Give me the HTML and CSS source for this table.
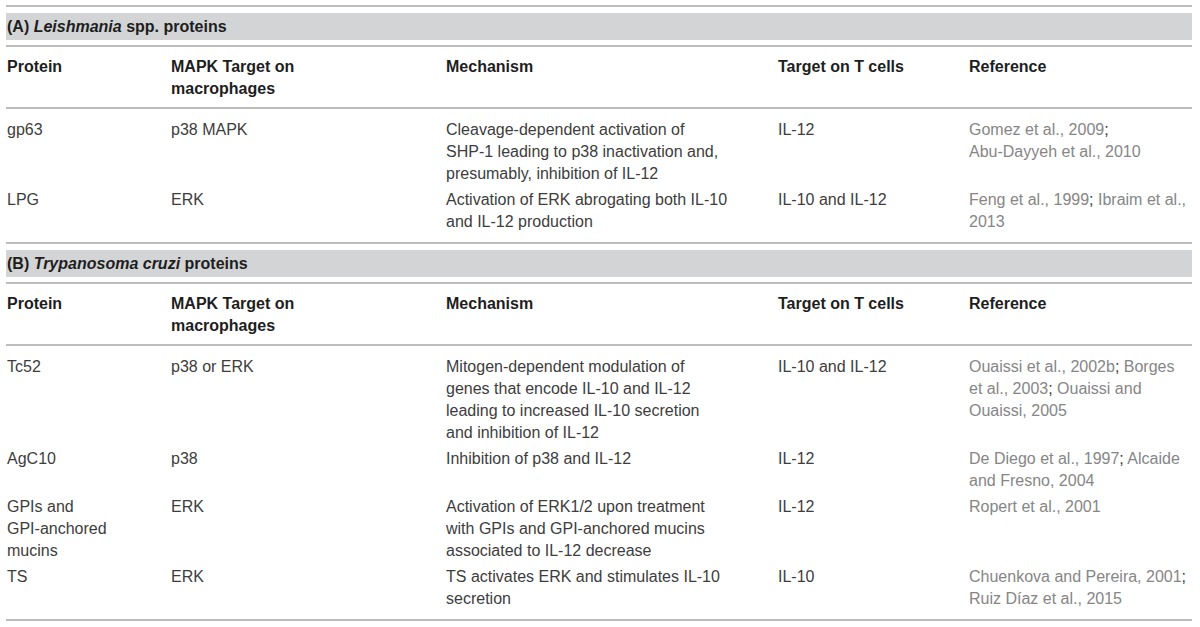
FILE: index.html
```html
<!DOCTYPE html>
<html lang="en">
<head>
<meta charset="utf-8">
<title>MAPK targets of parasite proteins</title>
<link rel="stylesheet" href="styles.css">
</head>
<body>
<div class="table">
  <div class="section"><div class="band">(A) <i>Leishmania</i> spp. proteins</div></div>
  <div class="row head">
    <div>Protein</div>
    <div>MAPK Target on<br>macrophages</div>
    <div>Mechanism</div>
    <div>Target on T cells</div>
    <div>Reference</div>
  </div>
  <div class="body">
    <div class="row">
      <div>gp63</div>
      <div>p38 MAPK</div>
      <div>Cleavage-dependent activation of<br>SHP-1 leading to p38 inactivation and,<br>presumably, inhibition of IL-12</div>
      <div>IL-12</div>
      <div class="ref"><span>Gomez et al., 2009</span>;<br><span>Abu-Dayyeh et al., 2010</span></div>
    </div>
    <div class="row">
      <div>LPG</div>
      <div>ERK</div>
      <div>Activation of ERK abrogating both IL-10<br>and IL-12 production</div>
      <div>IL-10 and IL-12</div>
      <div class="ref"><span>Feng et al., 1999</span>; <span>Ibraim et al.,<br>2013</span></div>
    </div>
  </div>
  <div class="section"><div class="band">(B) <i>Trypanosoma cruzi</i> proteins</div></div>
  <div class="row head">
    <div>Protein</div>
    <div>MAPK Target on<br>macrophages</div>
    <div>Mechanism</div>
    <div>Target on T cells</div>
    <div>Reference</div>
  </div>
  <div class="body">
    <div class="row">
      <div>Tc52</div>
      <div>p38 or ERK</div>
      <div>Mitogen-dependent modulation of<br>genes that encode IL-10 and IL-12<br>leading to increased IL-10 secretion<br>and inhibition of IL-12</div>
      <div>IL-10 and IL-12</div>
      <div class="ref"><span>Ouaissi et al., 2002b</span>; <span>Borges<br>et al., 2003</span>; <span>Ouaissi and<br>Ouaissi, 2005</span></div>
    </div>
    <div class="row">
      <div>AgC10</div>
      <div>p38</div>
      <div>Inhibition of p38 and IL-12</div>
      <div>IL-12</div>
      <div class="ref"><span>De Diego et al., 1997</span>; <span>Alcaide<br>and Fresno, 2004</span></div>
    </div>
    <div class="row">
      <div>GPIs and<br>GPI-anchored<br>mucins</div>
      <div>ERK</div>
      <div>Activation of ERK1/2 upon treatment<br>with GPIs and GPI-anchored mucins<br>associated to IL-12 decrease</div>
      <div>IL-12</div>
      <div class="ref"><span>Ropert et al., 2001</span></div>
    </div>
    <div class="row">
      <div>TS</div>
      <div>ERK</div>
      <div>TS activates ERK and stimulates IL-10<br>secretion</div>
      <div>IL-10</div>
      <div class="ref"><span>Chuenkova and Pereira, 2001</span>;<br><span>Ruiz Díaz et al., 2015</span></div>
    </div>
  </div>
</div>
</body>
</html>
```
FILE: styles.css
```css
html, body {
  margin: 0;
  padding: 0;
  background: #ffffff;
}

body {
  font-family: "Liberation Sans", Arial, sans-serif;
  font-size: 16px;
  line-height: 22px;
  color: #3d3d3d;
}

.table {
  margin: 5px 8px 0 6px;
  border-top: 2px solid #bdbdbd;
  border-bottom: 2px solid #bdbdbd;
}

.section {
  padding: 6px 0 5px;
  border-bottom: 2px solid #bdbdbd;
}

.band {
  background: #d3d4d6;
  height: 27px;
  line-height: 27px;
  padding-left: 1px;
  font-weight: bold;
  color: #1e1e1e;
}

.row {
  display: grid;
  grid-template-columns: 164px 275px 332px 191px 1fr;
  padding: 2px 0 2px 1px;
  white-space: nowrap;
}

.head {
  padding: 9px 0 7px 1px;
  font-weight: bold;
  color: #1e1e1e;
  border-bottom: 2px solid #bdbdbd;
}

.body {
  padding: 8px 0 7px;
}

.body + .section {
  border-top: 2px solid #bdbdbd;
}

.body:last-child {
  padding-bottom: 7px;
}

.ref {
  color: #3d3d3d;
}

.ref span {
  color: #868686;
}
```
